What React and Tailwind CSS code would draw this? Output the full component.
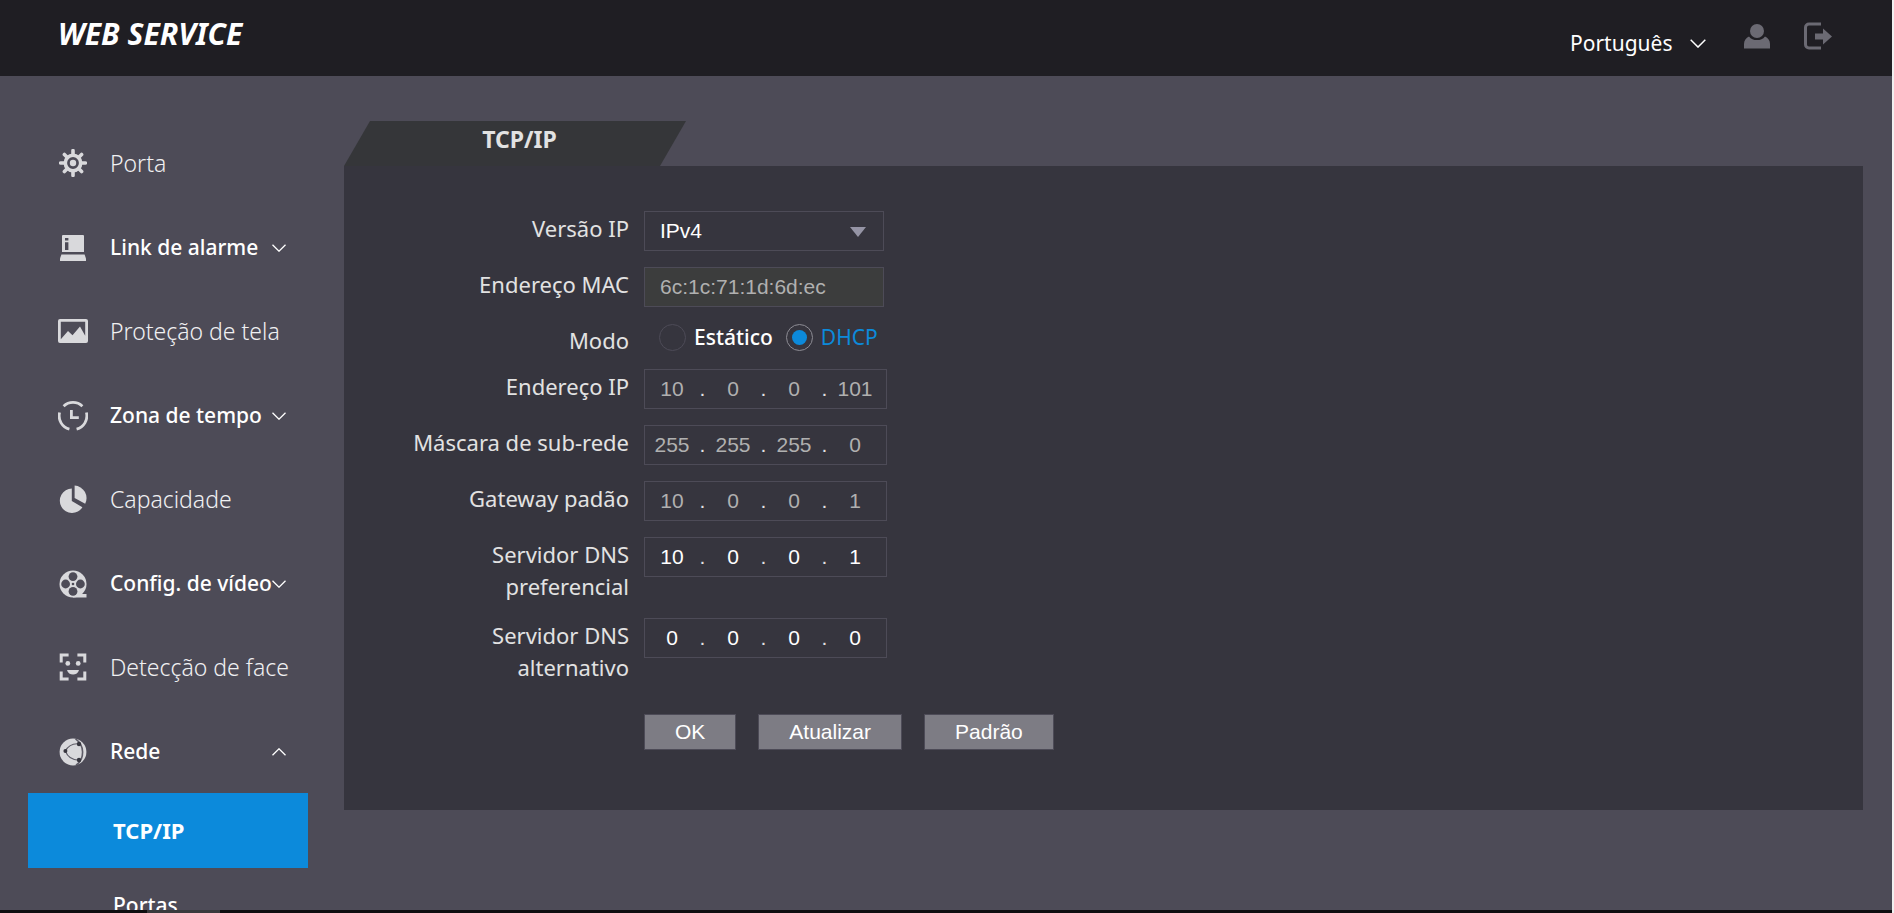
import React, { useState } from 'react';

const Gear = () => (
  <svg viewBox="0 0 28 28" className="w-7 h-7" fill="none" stroke="currentColor">
    <circle cx="14" cy="14" r="7.7" strokeWidth="3.6" />
    <circle cx="14" cy="14" r="3.2" fill="currentColor" stroke="none" />
    <path
      d="M14 6V1.6M14 22v4.4M6 14H1.6M22 14h4.4M8.4 8.4 5.4 5.4M19.6 8.4l3-3M8.4 19.6l-3 3M19.6 19.6l3 3"
      strokeWidth="3.6"
      strokeLinecap="round"
    />
  </svg>
);

const Alarm = () => (
  <svg viewBox="0 0 28 28" className="w-7 h-7" fill="currentColor">
    <path fillRule="evenodd" d="M4 1h20a1 1 0 0 1 1 1v16H3V2a1 1 0 0 1 1-1zM6 4v2.6h3.4V4zM6 8.2V16h3.4V8.2z" />
    <path d="M2.4 20.4h23.2l1.4 4v2.6H1v-2.6z" />
  </svg>
);

const Picture = () => (
  <svg viewBox="0 0 30 24" className="w-[30px] h-6" fill="currentColor">
    <path
      fillRule="evenodd"
      d="M2 0h26a2 2 0 0 1 2 2v20a2 2 0 0 1-2 2H2a2 2 0 0 1-2-2V2a2 2 0 0 1 2-2zM2.8 2.8v17.4L10 12l4.5 4.2L22 7.4l5.2 9.4V2.8z"
    />
  </svg>
);

const Clock = () => (
  <svg viewBox="0 0 30 30" className="w-[30px] h-[30px]" fill="none" stroke="currentColor" strokeWidth="2.8">
    <path d="M5.6 5.2A13.7 13.7 0 0 1 24.4 5.2" />
    <path d="M1.6 11.5A13.7 13.7 0 0 0 11.4 28.2" />
    <path d="M28.4 11.5A13.7 13.7 0 0 1 18.6 28.2" />
    <path d="M13.4 9v7.6h7.4" />
  </svg>
);

const Pie = () => (
  <svg viewBox="0 0 28 28" className="w-7 h-7" fill="currentColor">
    <path d="M12.8 3.6V16l10.6 6.2A12.2 12.2 0 1 1 12.8 3.6z" />
    <path d="M15.6.6a12.6 12.6 0 0 1 10.6 18.2L15.6 13z" />
  </svg>
);

const Film = () => (
  <svg viewBox="0 0 28 28" className="w-7 h-7">
    <circle cx="14" cy="14" r="13.5" fill="currentColor" />
    <path d="M14 24h13.5v3.5H14z" fill="currentColor" />
    <g fill="#4d4b57">
      <circle cx="14" cy="6.6" r="4.4" />
      <circle cx="14" cy="21.4" r="4.4" />
      <circle cx="6.6" cy="14" r="4.4" />
      <circle cx="21.4" cy="14" r="4.4" />
      <circle cx="14" cy="14" r="1.3" />
    </g>
  </svg>
);

const Face = () => (
  <svg viewBox="0 0 28 28" className="w-7 h-7" fill="currentColor">
    <path
      d="M2.2 9.4V2H9.6M18.4 2h7.4v7.4M25.8 18.6V26h-7.4M9.6 26H2.2v-7.4"
      fill="none"
      stroke="currentColor"
      strokeWidth="3"
    />
    <circle cx="8.8" cy="10.4" r="2.4" />
    <circle cx="19.2" cy="10.4" r="2.4" />
    <path d="M8 17h12c-.8 3-3.2 4.6-6 4.6S8.8 20 8 17z" />
  </svg>
);

const Network = () => (
  <svg viewBox="0 0 28 28" className="w-7 h-7">
    <circle cx="14" cy="14" r="13.4" fill="currentColor" />
    <g fill="none" stroke="#5d5b66" strokeWidth="1.1">
      <path d="M6.4 13C9 8 14 5.2 20 5.8" />
      <path d="M6.4 13c2 5.6 7 9 13.6 9.2" />
      <path d="M16.5.8C21 4 23.6 9 23.6 14s-2 10-6.6 13.2" strokeWidth="1.6" />
    </g>
    <g fill="#37363f">
      <circle cx="6.4" cy="13" r="2" />
      <circle cx="20" cy="6" r="2.2" />
      <circle cx="20" cy="22" r="2.2" />
    </g>
  </svg>
);

const Chevron = ({ up, className = 'w-3.5 h-2' }) => (
  <svg viewBox="0 0 14 8" className={`shrink-0 ${className}`} fill="none" stroke="currentColor" strokeWidth="1.3">
    <path d={up ? 'M.5 7.3 7 .8l6.5 6.5' : 'M.5.7 7 7.2 13.5.7'} />
  </svg>
);

const menu = [
  { label: 'Porta', icon: Gear },
  { label: 'Link de alarme', icon: Alarm, group: true },
  { label: 'Proteção de tela', icon: Picture },
  { label: 'Zona de tempo', icon: Clock, group: true },
  { label: 'Capacidade', icon: Pie },
  { label: 'Config. de vídeo', icon: Film, group: true },
  { label: 'Detecção de face', icon: Face },
  { label: 'Rede', icon: Network, group: true, open: true, children: ['TCP/IP', 'Portas'] },
];

function MenuItem({ item }) {
  const Icon = item.icon;
  const inner = (
    <>
      <span className="w-[30px] shrink-0 flex justify-center text-[#d9d9dc]">
        <Icon />
      </span>
      <span className="flex-1 min-w-0 whitespace-nowrap">{item.label}</span>
    </>
  );
  const base = 'w-full h-[84px] flex items-center gap-[22px] pl-[30px] pr-[22px] text-left';

  return (
    <li>
      {item.group ? (
        <button type="button" aria-expanded={!!item.open} className={`${base} pt-0.5 text-[21px] font-medium text-white`}>
          {inner}
          <Chevron up={item.open} className="w-3.5 h-2 -ml-[22px]" />
        </button>
      ) : (
        <a href="#" className={`${base} text-[23px] font-light text-[#f0f0f2]`}>
          {inner}
        </a>
      )}
      {item.children && (
        <ul>
          {item.children.map((child, i) => (
            <li key={child}>
              <a
                href="#"
                className={`h-[75px] flex items-center pl-[85px] text-white ${i === 0 ? 'bg-[#0c8adb] text-[22px] font-bold' : 'text-[21px] font-medium'}`}
              >
                {child}
              </a>
            </li>
          ))}
        </ul>
      )}
    </li>
  );
}

function Row({ label, htmlFor, className = '', children }) {
  return (
    <div className={`flex items-start gap-[15px] mb-4 ${className}`}>
      <label htmlFor={htmlFor} className="w-[221px] pt-px shrink-0 text-right text-[22px] leading-8 text-[#e2e2e2]">
        {label}
      </label>
      {children}
    </div>
  );
}

function IpField({ id, name, value, disabled }) {
  const [parts, setParts] = useState(value.split('.'));
  const update = (i, v) => setParts(prev => prev.map((p, n) => (n === i ? v : p)));

  return (
    <div className="w-[243px] h-10 flex items-center border border-[#4d4b57] font-[Liberation_Sans,sans-serif] text-[21px]">
      {parts.map((part, i) => (
        <React.Fragment key={i}>
          {i > 0 && <span className="w-[7px] text-center text-[#e2e2e2]">.</span>}
          <input
            id={i === 0 ? id : undefined}
            aria-label={i === 0 ? undefined : `${name} ${i + 1}`}
            value={part}
            disabled={disabled}
            maxLength={3}
            onChange={e => update(i, e.target.value)}
            className={`w-[54px] text-center bg-transparent outline-none ${disabled ? 'text-[#b0b0b0]' : 'text-white'}`}
          />
        </React.Fragment>
      ))}
    </div>
  );
}

const ipFields = [
  { id: 'ip', label: 'Endereço IP', value: '10.0.0.101', locked: true },
  { id: 'mask', label: 'Máscara de sub-rede', value: '255.255.255.0', locked: true },
  { id: 'gateway', label: 'Gateway padão', value: '10.0.0.1', locked: true },
  { id: 'dns1', label: 'Servidor DNS preferencial', value: '10.0.0.1' },
  { id: 'dns2', label: 'Servidor DNS alternativo', value: '0.0.0.0' },
];

const modes = [
  { id: 'static', label: 'Estático' },
  { id: 'dhcp', label: 'DHCP' },
];

export default function App() {
  const [mode, setMode] = useState('dhcp');

  return (
    <div className="h-screen flex flex-col overflow-hidden bg-[#4d4b57] border-r-2 border-[#f0f0f0] font-[Noto_Sans,sans-serif]">
      <header className="h-[76px] shrink-0 flex justify-between bg-[#1f1e23] pl-[58px] pr-[60px]">
        <h1 className="pt-4 text-[30px] leading-9 font-bold italic text-white">WEB SERVICE</h1>
        <div className="flex items-start text-[#6b6a73]">
          <div className="relative mt-[27px] text-white">
            <select
              aria-label="Idioma"
              defaultValue="pt"
              className="appearance-none bg-transparent pr-[33px] text-[21px] leading-8 outline-none"
            >
              <option value="pt">Português</option>
              <option value="en">English</option>
            </select>
            <Chevron className="w-4 h-[9px] absolute right-0 top-3 pointer-events-none" />
          </div>
          <button type="button" aria-label="Usuário" className="ml-[38px] mt-6">
            <svg viewBox="0 0 26 25" className="w-[26px] h-[25px]" fill="currentColor">
              <circle cx="13" cy="7" r="7" />
              <path d="M0 24.5V20c0-3.5 2-6 5-7.5 2 2.6 4.600 3.600 8 3.600s6-1 8-3.600c3 1.500 5 4 5 7.500v4.5z" />
            </svg>
          </button>
          <button type="button" aria-label="Sair" className="ml-[34px] mt-[22px]">
            <svg viewBox="0 0 28 28" className="w-7 h-7" fill="currentColor">
              <path d="M17 2H5C3 2 1.5 3.500 1.5 5.500v17c0 2 1.500 3.500 3.500 3.500h12" fill="none" stroke="currentColor" strokeWidth="3" />
              <path d="M11 11.5h8v-5l9 8-9 8v-5h-8z" />
            </svg>
          </button>
        </div>
      </header>

      <div className="flex-1 min-h-0 flex overflow-hidden pt-[45px] pl-7 pr-[29px]">
        <nav className="w-[280px] shrink-0">
          <ul>
            {menu.map(item => (
              <MenuItem key={item.label} item={item} />
            ))}
          </ul>
        </nav>

        <main className="flex-1 min-w-0 ml-9">
          <div className="w-[342px] h-[45px] bg-[#353639] text-center [clip-path:polygon(26px_0,100%_0,316px_100%,0_100%)]">
            <h2 className="pl-[9px] text-[23px] leading-9 font-bold text-[#e2e2e2]">TCP/IP</h2>
          </div>
          <form
            className="bg-[#36353e] pt-[45px] pb-[60px] pl-16"
            onSubmit={e => e.preventDefault()}
          >
            <Row label="Versão IP" htmlFor="version">
              <div className="relative">
                <select
                  id="version"
                  className="appearance-none w-60 h-10 px-[15px] bg-transparent border border-[#4d4b57] font-[Liberation_Sans,sans-serif] text-[21px] text-white outline-none"
                >
                  <option>IPv4</option>
                </select>
                <svg
                  viewBox="0 0 16 10"
                  className="w-4 h-2.5 absolute right-[18px] top-4 pointer-events-none"
                  fill="#9594a5"
                >
                  <path d="M0 0h16L8 10z" />
                </svg>
              </div>
            </Row>
            <Row label="Endereço MAC" htmlFor="mac">
              <input
                id="mac"
                disabled
                defaultValue="6c:1c:71:1d:6d:ec"
                className="w-60 h-10 px-[15px] bg-[#3c3d3d] border border-[#4d4b57] font-[Liberation_Sans,sans-serif] text-[21px] text-[#b0b0b0]"
              />
            </Row>
            <Row label="Modo" htmlFor="dhcp" className="h-[30px]">
              <div className="flex items-center gap-[13px] pl-[15px] text-[21px] leading-7">
                {modes.map(m => (
                  <label
                    key={m.id}
                    className={`flex items-center gap-2 ${mode === m.id ? 'text-[#0c8adb]' : 'font-medium text-white'}`}
                  >
                    <input
                      id={m.id}
                      type="radio"
                      name="mode"
                      checked={mode === m.id}
                      onChange={() => setMode(m.id)}
                      className="appearance-none w-[27px] h-[27px] p-[5px] rounded-full border border-[#4d4b57] bg-clip-content checked:border-[#8d8c94] checked:bg-[#0c8adb]"
                    />
                    {m.label}
                  </label>
                ))}
              </div>
            </Row>
            {ipFields.map(f => (
              <Row key={f.id} label={f.label} htmlFor={f.id}>
                <IpField id={f.id} name={f.label} value={f.value} disabled={f.locked && mode === 'dhcp'} />
              </Row>
            ))}
            <div className="flex gap-[22px] pl-[236px] pt-[15px]">
              {['OK', 'Atualizar', 'Padrão'].map(text => (
                <button
                  key={text}
                  type="button"
                  className="h-9 px-[30px] bg-[#7d7c84] border border-[#4d4b57] font-[Liberation_Sans,sans-serif] text-[21px] leading-8 text-white"
                >
                  {text}
                </button>
              ))}
            </div>
          </form>
        </main>
      </div>

      <div className="h-[3px] shrink-0 flex bg-[#0f0e10] pl-[147px]">
        <div className="w-[73px] bg-[#3a393c]" />
      </div>
    </div>
  );
}
